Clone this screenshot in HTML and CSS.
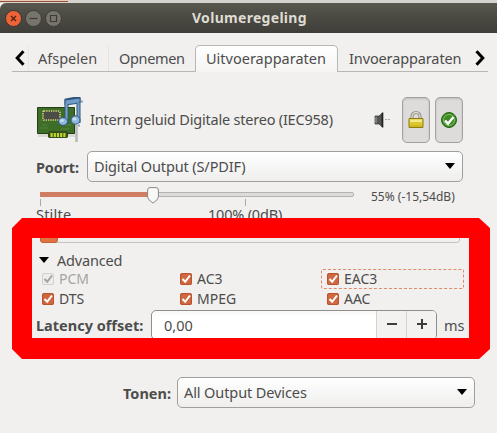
FILE: index.html
```html
<!DOCTYPE html>
<html lang="nl">
<head>
  <meta charset="UTF-8" />
  <meta name="viewport" content="width=device-width, initial-scale=1.0"/>
  <title>Volumeregeling</title>
  <link rel="stylesheet" href="styles.css">
</head>
<body>
  <div class="backdrop"><div class="backdrop-edge"></div></div>
  <div class="window">
    <div class="titlebar">
      <div class="win-buttons">
        <svg class="win-btn" viewBox="0 0 17 17"><circle cx="8.5" cy="8.5" r="8" fill="#ee6438" stroke="#38352f"/><path d="M6 6l5 5M11 6l-5 5" stroke="#50230f" stroke-width="1.3"/></svg>
        <svg class="win-btn" viewBox="0 0 17 17"><circle cx="8.5" cy="8.5" r="8" fill="#77756b" stroke="#3c3b36"/><path d="M4.5 8.5h8" stroke="#3b3a35" stroke-width="1.2"/></svg>
        <svg class="win-btn" viewBox="0 0 17 17"><circle cx="8.5" cy="8.5" r="8" fill="#77756b" stroke="#3c3b36"/><path d="M5.5 5.5h6v6h-6z" fill="none" stroke="#3b3a35" stroke-width="1.2"/></svg>
      </div>
      <div class="title">Volumeregeling</div>
    </div>

    <div class="tabs">
      <svg class="tab-arrow" viewBox="0 0 10 16"><path d="M8.5 1.2L2.2 8l6.3 6.8" fill="none" stroke="#000" stroke-width="3"/></svg>
      <div class="tab tab-play">Afspelen</div>
      <div class="tab tab-record">Opnemen</div>
      <div class="tab tab-output active">Uitvoerapparaten</div>
      <div class="tab tab-input">Invoerapparaten</div>
      <svg class="tab-arrow" viewBox="0 0 10 16"><path d="M1.5 1.2L7.8 8l-6.3 6.8" fill="none" stroke="#000" stroke-width="3"/></svg>
    </div>

    <div class="device">
      <svg class="card-icon" viewBox="0 0 48 46">
        <path d="M2 37h38v3H2z" fill="#d9dbd2"/>
        <path d="M12.500 33h19v6.500h-19z" fill="#28441a" stroke="#1d3213"/>
        <path d="M1.500 10.500h37v26h-37z" fill="#3e6d27" stroke="#243e17"/>
        <path d="M4 31h8M6 28h5M25 32h8M29 28h6M4 23h3" stroke="#558440"/>
        <path d="M12.500 34h19v7h-19z" fill="#33501e"/>
        <path d="M14.500 38h16" stroke="#c2d62a" stroke-width="4" stroke-dasharray="2.200 1"/>
        <rect x="7" y="14" width="17" height="9" rx="1" fill="#4a4c45" stroke="#d9d77d" stroke-width="1.600" stroke-dasharray="1.300 1"/>
        <path d="M40.500 28v17" stroke="#b8bab5" stroke-width="2.500"/>
        <path d="M30.500 27V3.500L42.500 1v25" fill="none" stroke="#30557c" stroke-width="4"/>
        <path d="M29 3l15-2v5l-15 2z" fill="#6f9dc7" stroke="#30557c"/>
        <path d="M30.500 7v19M42.500 6v19" stroke="#79a4ca" stroke-width="2"/>
        <ellipse cx="27" cy="24.500" rx="4.500" ry="3.900" fill="#8db8dc" stroke="#30557c"/>
        <ellipse cx="39.500" cy="23" rx="4.500" ry="4.200" fill="#8db8dc" stroke="#30557c"/>
        <ellipse cx="26" cy="23.500" rx="2" ry="1.500" fill="#c5def0"/>
        <ellipse cx="38.500" cy="22" rx="2" ry="1.500" fill="#c5def0"/>
        <path d="M45 4.500h2M42 28.500h2" stroke="#8ca6bc" stroke-width="2"/>
      </svg>
      <div class="device-name">Intern geluid Digitale stereo (IEC958)</div>
      <svg class="mute" viewBox="0 0 18 16">
        <path d="M1 4h4l4-3.500v15L5 12H1z" fill="#555753" stroke="#2e3436" stroke-width=".7"/>
        <path d="M2 5v6" stroke="#a8aaa6"/><path d="M8.300 1v14" stroke="#222" stroke-width="1.400"/>
        <path d="M11 7.500h6" stroke="#aaa" stroke-dasharray="2 1"/>
      </svg>
      <button class="toggle">
        <svg viewBox="0 0 16 18"><path d="M4 9V5.500a4 4 0 0 1 8 0V9" fill="none" stroke="#85867c" stroke-width="3"/><path d="M4 9V5.500a4 4 0 0 1 8 0V9" fill="none" stroke="#dcddd3" stroke-width="1.300"/><path d="M1 7.500h14v9H1z" fill="#dcc92e" stroke="#8e7b12"/><path d="M2 8.500h12v2.500H2z" fill="#f4e98a"/><path d="M2 15h12" stroke="#c0a812"/></svg>
      </button>
      <button class="toggle">
        <svg viewBox="0 0 16 18"><circle cx="8" cy="9" r="7.500" fill="#3c8b25" stroke="#286214"/><circle cx="8" cy="9" r="5.500" fill="none" stroke="#83be67"/><path d="M4 9.500l3 3.200L12.500 6" fill="none" stroke="#fff" stroke-width="2.500"/></svg>
      </button>
    </div>

    <div class="port">
      <b class="port-label">Poort:</b>
      <div class="combo"><span class="port-value">Digital Output (S/PDIF)</span><i class="arrow"></i></div>
    </div>

    <div class="volume">
      <div class="scale">
        <div class="track"><div class="fill"></div></div>
        <svg class="thumb" viewBox="0 0 12 17"><path d="M3 .6h6Q11.400.600 11.400 3v7Q11.400 12.500 6 16.200.600 12.500.600 10V3Q.600.600 3 .6z" fill="#f8f8f7" stroke="#8a8985"/></svg>
        <div class="marks">
          <div class="mark"><span class="silence">Stilte</span></div>
          <div class="mark"><span class="full">100% (0dB)</span></div>
        </div>
      </div>
      <div class="volume-value"><span>55% (-15,54dB)</span></div>
    </div>

    <div class="meter"><div class="meter-fill"></div></div>

    <div class="expander"><i class="arrow"></i><span>Advanced</span></div>
    <div class="formats">
      <label class="format disabled"><svg class="check" viewBox="0 0 12 12"><path d="M2.500 6l2.700 2.800L10 2.500"/></svg><span>PCM</span></label>
      <label class="format"><svg class="check" viewBox="0 0 12 12"><path d="M2.500 6l2.700 2.800L10 2.500"/></svg><span>AC3</span></label>
      <label class="format focused"><svg class="check" viewBox="0 0 12 12"><path d="M2.500 6l2.700 2.800L10 2.500"/></svg><span>EAC3</span></label>
      <label class="format"><svg class="check" viewBox="0 0 12 12"><path d="M2.500 6l2.700 2.800L10 2.500"/></svg><span>DTS</span></label>
      <label class="format"><svg class="check" viewBox="0 0 12 12"><path d="M2.500 6l2.700 2.800L10 2.500"/></svg><span>MPEG</span></label>
      <label class="format"><svg class="check" viewBox="0 0 12 12"><path d="M2.500 6l2.700 2.800L10 2.500"/></svg><span>AAC</span></label>
    </div>
    <div class="latency">
      <b class="latency-label">Latency offset:</b>
      <div class="spin">
        <span class="spin-value">0,00</span>
        <div class="step"><svg viewBox="0 0 10 10"><path d="M0 5h10"/></svg></div>
        <div class="step"><svg viewBox="0 0 10 10"><path d="M0 5h10M5 0v10"/></svg></div>
      </div>
      <span class="ms">ms</span>
    </div>

    <div class="show">
      <b class="show-label">Tonen:</b>
      <div class="combo"><span class="show-value">All Output Devices</span><i class="arrow"></i></div>
    </div>
  </div>

  <!-- highlight frame around the advanced section -->
  <svg class="highlight" viewBox="0 0 478 141"><path fill="#f00" fill-rule="evenodd" d="M10 0H467L478 10V131L467 141H10L0 131V10zM20 20V120H457V20z"/></svg>
</body>
</html>
```
FILE: styles.css
```css
* {
  box-sizing: border-box;
}
body {
  margin: 0;
  height: 433px;
  overflow: hidden;
  position: relative;
  background: #f1f0ee;
  color: #4c4c4c;
  font-family: "Noto Sans", "Open Sans", sans-serif;
  font-size: 14.5px;
  line-height: 20px;
  white-space: nowrap;
}
svg {
  display: block;
  flex: none;
}
.backdrop {
  height: 3px;
  background: #d6d3ce;
}
.backdrop-edge {
  width: 68px;
  height: 2px;
  background: #ecc9b6;
  border-bottom: 1px solid #96513d;
}
.titlebar {
  height: 30px;
  display: flex;
  align-items: center;
  background: linear-gradient(#59584f, #4b4a43 45%, #3f3e39);
  border-radius: 6px 0 0 0;
}
.win-buttons {
  display: flex;
  gap: 3px;
  padding-left: 5px;
}
.win-btn {
  width: 17px;
  height: 17px;
}
.title {
  margin-left: 130px;
  color: #dfdbd2;
  font-weight: bold;
  font-size: 14px;
  letter-spacing: 0.3px;
}
.tabs {
  display: flex;
  margin: 12px 9px 0 12px;
  height: 27px;
  border-bottom: 1px solid #b9b7b4;
}
.tab-arrow {
  width: 10px;
  height: 16px;
  margin: 5px 0 0 3px;
}
.tab {
  height: 26px;
  padding-top: 3px;
}
.tab-play {
  width: 80px;
  margin-left: 3px;
  padding-left: 9px;
  border-left: 1px solid #e8e7e4;
}
.tab-record {
  width: 87px;
  padding-left: 10px;
  border-left: 1px solid #e5e4e1;
  letter-spacing: -0.35px;
}
.tab-output {
  width: 143px;
  padding-left: 10px;
}
.tab-input {
  width: 134px;
  padding-left: 11px;
  letter-spacing: -0.12px;
}
.tab.active {
  height: 27px;
  padding-top: 2px;
  background: linear-gradient(#fff, #f5f4f3);
  border: 1px solid #b9b7b4;
  border-bottom: none;
  border-radius: 5px 5px 0 0;
}
.device {
  display: flex;
  align-items: center;
  height: 46px;
  margin: 25px 33px 0 36px;
}
.card-icon {
  width: 48px;
  height: 46px;
}
.device-name {
  width: 290px;
  padding-left: 6px;
  margin-top: -3px;
  letter-spacing: -0.21px;
}
.mute {
  width: 18px;
  height: 16px;
  margin-right: 10px;
}
.toggle {
  flex: none;
  width: 28px;
  height: 46px;
  padding: 0 5px;
  background: #dddcdb;
  border: 1px solid #a3a2a0;
  border-radius: 5px;
  box-shadow: inset 0 1px 2px #bbb;
}
.toggle + .toggle {
  margin-left: 5px;
}
.toggle svg {
  width: 16px;
  height: 18px;
}
.port {
  display: flex;
  align-items: center;
  height: 31px;
  margin: 8px 34px 0 36px;
}
.port-label {
  width: 51px;
  letter-spacing: -0.2px;
}
.port-value {
  letter-spacing: -0.13px;
}
.show-value {
  letter-spacing: -0.1px;
}
.combo {
  flex: 1;
  display: flex;
  align-items: center;
  justify-content: space-between;
  height: 31px;
  padding: 0 7px 1px 6px;
  background: linear-gradient(#fff, #efeeed);
  border: 1px solid #a09f9c;
  border-radius: 5px;
}
.arrow {
  border: 5px solid transparent;
  border-top: 6px solid #000;
  border-bottom: none;
}
.volume {
  display: flex;
  height: 50px;
  margin-left: 40px;
}
.scale {
  position: relative;
  width: 314px;
  padding-top: 10px;
}
.track {
  height: 5px;
  background: #dddcda;
  border: 1px solid #b4b3b0;
  border-radius: 2px;
}
.fill {
  width: 113px;
  height: 5px;
  margin: -1px;
  background: #cf7d63;
}
.thumb {
  position: absolute;
  left: 107px;
  top: 5px;
  width: 12px;
  height: 17px;
}
.marks {
  display: flex;
  margin-top: 2px;
}
.mark {
  flex: none;
  width: 205px;
  height: 7px;
  padding-top: 5px;
  border-left: 1px solid #aaa9a6;
}
.mark:last-child {
  width: 109px;
}
.silence {
  margin-left: -5px;
  letter-spacing: 0.2px;
}
.full {
  margin-left: -38px;
  letter-spacing: -0.2px;
}
.volume-value {
  padding: 5px 0 0 17px;
  font-size: 12px;
}
.meter {
  height: 11px;
  margin: 0 37px 0 40px;
  border: 1px solid #c5c3c0;
  border-radius: 3px;
}
.meter-fill {
  width: 18px;
  height: 11px;
  margin: -1px;
  background: #e07346;
  border: 1px solid #c85d35;
  border-radius: 3px;
}
.expander {
  display: flex;
  align-items: center;
  gap: 8px;
  height: 18px;
  line-height: 18px;
  margin: 8px 0 0 39px;
  letter-spacing: -0.2px;
}
.formats {
  display: grid;
  grid-template-columns: 138px 147px 143px;
  grid-auto-rows: 20px;
  margin-left: 36px;
}
.format {
  display: flex;
  align-items: center;
  gap: 5px;
  padding-left: 6px;
  font-size: 14px;
  line-height: 16px;
}
.format.focused {
  padding-left: 5px;
  border: 1px dashed #df8a68;
  border-radius: 2px;
}
.check {
  width: 12px;
  height: 12px;
  background: #cf6841;
  border-radius: 2.5px;
  box-shadow: inset 0 0 0 1px #b9532e;
}
.check path {
  fill: none;
  stroke: #fff;
  stroke-width: 2;
}
.disabled {
  color: #a5a4a2;
}
.disabled .check {
  background: #ececea;
  box-shadow: inset 0 0 0 1px #d2d1cf;
}
.disabled .check path {
  stroke: #a3a2a0;
}
.latency {
  display: flex;
  align-items: center;
  height: 30px;
  margin: 1px 0 0 36px;
}
.latency-label {
  width: 115px;
}
.spin {
  display: flex;
  align-items: center;
  width: 286px;
  height: 30px;
  background: linear-gradient(#f8f8f7, #fff 6px);
  border: 1px solid #8f8e8b;
  border-radius: 5px;
  overflow: hidden;
}
.spin-value {
  flex: 1;
  padding-left: 12px;
}
.step {
  width: 30px;
  height: 28px;
  padding-bottom: 2px;
  display: grid;
  place-items: center;
  background: #f3f2f1;
  border-left: 1px solid #d4d3d1;
}
.step svg {
  width: 10px;
  height: 10px;
}
.step path {
  stroke: #3c3c3c;
  stroke-width: 2;
}
.ms {
  margin-left: 7px;
}
.show {
  display: flex;
  align-items: center;
  height: 31px;
  margin: 37px 22px 0 123px;
}
.show-label {
  width: 54px;
}
.highlight {
  position: absolute;
  left: 12px;
  top: 218px;
  width: 478px;
  height: 141px;
}
```
